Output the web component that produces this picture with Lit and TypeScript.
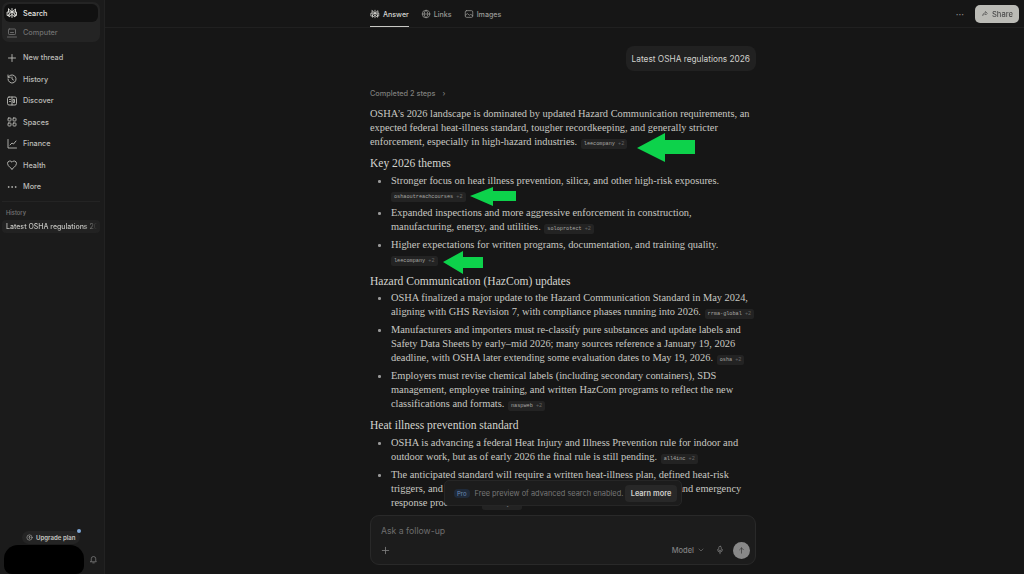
import { LitElement, html, css, svg } from "lit";
import { customElement } from "lit/decorators.js";

const ic = (body: unknown, size = 12) => html`<svg class="ic" width=${size} height=${size} viewBox="0 0 24 24" fill="none" stroke="currentColor" stroke-width="1.8" stroke-linecap="round" stroke-linejoin="round">${body}</svg>`;

const logo = svg`<path d="M12 3v18M5 4l7 6 7-6v6M5 4v6M3 10h18v7h-3v-3l-6-4-6 4v3H3zM6 14v6l6-5 6 5v-6"/>`;
const nav = [
  ["New thread", svg`<path d="M12 5v14M5 12h14"/>`],
  ["History", svg`<path d="M4 12a8 8 0 1 0 2.500-5.800L4 8.500M4 4v4.500h4.500M12 8v4l3 2"/>`],
  ["Discover", svg`<rect x="3" y="4" width="18" height="16" rx="3"/><path d="M12 4v16M7 9h2M7 13h2M15 9h2v6h-2z"/>`],
  ["Spaces", svg`<rect x="4" y="4" width="6" height="6" rx="1.500"/><rect x="14" y="4" width="6" height="6" rx="1.500"/><rect x="4" y="14" width="6" height="6" rx="1.500"/><rect x="14" y="14" width="6" height="6" rx="1.500"/>`],
  ["Finance", svg`<path d="M4 3v17h17M8 14l4-4 3 2 5-6"/>`],
  ["Health", svg`<path d="M12 20S3 14.500 3 8.800A4.800 4.800 0 0 1 12 6.500a4.800 4.800 0 0 1 9 2.300C21 14.500 12 20 12 20z"/>`],
  ["More", svg`<circle cx="5" cy="12" r=".8"/><circle cx="12" cy="12" r=".8"/><circle cx="19" cy="12" r=".8"/>`],
] as const;

const pill = (name: string) => html`<span class="pill">${name} <i>+2</i></span>`;

@customElement("app-root")
export class AppRoot extends LitElement {
  static styles = css`
    :host { display: block; width: 1024px; height: 574px; overflow: hidden; background: #161616; font-family: Inter, "Noto Sans", sans-serif; color: #d6d6d2; position: relative; }
    .app { display: flex; height: 574px; }
    .side { width: 105px; flex: none; box-sizing: border-box; background: #1b1b1b; border-right: 1px solid #222; display: flex; flex-direction: column; padding: 2px 4px 0 2px; font-size: 7.300px; font-weight: 500; color: #bdbdb9; }
    .ic { display: block; flex: none; }
    .mode { background: #242424; border-radius: 7px; height: 40px; margin-bottom: 5px; display: flex; flex-direction: column; box-sizing: border-box; padding: 2px 2px 0; }
    .mode div { height: 18px; display: flex; align-items: center; gap: 5px; padding-left: 2px; border-radius: 6px; }
    .mode .on { background: #111; color: #e4e4e0; }
    .mode .off { color: #707070; height: 19px; margin-top: 1px; }
    .nav { display: flex; align-items: center; gap: 5px; height: 21.500px; padding-left: 4px; }
    .hist { border-top: 1px solid #242424; margin-top: 3px; padding: 7px 4px 0; font-size: 5.800px; line-height: 7px; color: #777; }
    .thread { background: #222; border-radius: 4px; height: 13px; display: flex; align-items: center; padding: 0 3px 0 4px; margin: 4px 0 0; font-size: 7px; white-space: nowrap; overflow: hidden; color: #c4c4c0; }
    .thread span { display: block; width: 100%; overflow: hidden; -webkit-mask-image: linear-gradient(to right, #000 85%, transparent); mask-image: linear-gradient(to right, #000 85%, transparent); }
    .grow { flex: 1; }
    .up { align-self: flex-start; margin: 0 0 1px 20px; height: 13px; box-sizing: border-box; padding: 0 4px; display: flex; gap: 3px; align-items: center; background: #242424; border-radius: 7px; font-size: 6.100px; font-weight: 600; position: relative; color: #c4c4c0; white-space: nowrap; }
    .up b { position: absolute; right: -1px; top: -2px; width: 4px; height: 4px; border-radius: 50%; background: #7fa8d8; }
    .user { display: flex; align-items: center; margin-left: 2px; gap: 5px; color: #888; }
    .blob { width: 80px; height: 29px; background: #000; border-radius: 14px 14px 8px 8px; flex: none; }
    .main { flex: 1; min-width: 0; position: relative; overflow: hidden; }
    .top { height: 28px; box-sizing: border-box; border-bottom: 1px solid #202020; padding: 1px 0 0 265px; display: flex; align-items: stretch; font-size: 7.100px; color: #9a9a96; font-weight: 500; }
    .tab { display: flex; align-items: center; gap: 3px; margin-right: 12px; }
    .tab.on { color: #d8d8d4; box-shadow: inset 0 -1px 0 #c8c8c4; }
    .actions { margin-left: auto; display: flex; align-items: center; gap: 11px; padding-right: 5px; }
    .dots { color: #888; font-size: 9px; line-height: 1; }
    .share { display: flex; align-items: center; gap: 3px; height: 18px; padding: 0 6px; background: #d8d8d2; color: #555; border-radius: 5px; opacity: .85; font-size: 7.600px; }
    .col { padding-left: 265px; width: 386px; }
    .ask { display: flex; justify-content: flex-end; padding-top: 18px; }
    .ask span { background: #212121; border-radius: 8px; height: 25px; display: flex; align-items: center; padding: 0 6px; font-size: 8.300px; color: #d0d0cc; }
    .steps { margin-top: 18px; font-size: 7.300px; color: #7d7d7a; font-weight: 500; height: 9px; line-height: 9px; }
    .steps em { font-style: normal; margin-left: 5px; }
    .doc { font-family: "Liberation Serif", serif; font-size: 10.400px; line-height: 14px; color: #c8c8c2; white-space: nowrap; }
    p { margin: 9px 0 0; }
    h3 { margin: 7px 0 4px; font-size: 11.550px; font-weight: 400; line-height: 14px; color: #d4d4ce; }
    h3.shift { margin: 8px 0 3px; }
    ul { list-style: none; margin: 0; padding: 0 0 0 21px; position: relative; }
    li { margin-bottom: 4px; position: relative; }
    li::before { content: ""; position: absolute; left: -13px; top: 6px; width: 2.500px; height: 2.500px; border-radius: 50%; background: #999; }
    .pill { display: inline-block; vertical-align: 0; height: 10px; line-height: 10px; padding: 0 3px; margin-left: 1px; background: #232323; border-radius: 2.500px; font-family: "Liberation Mono", monospace; font-size: 5.200px; color: #a8a8a4; }
    .pill i { font-style: normal; color: #666; margin-left: 0; }
    li .block { display: block; line-height: 14px; height: 14px; }
    .block .pill { margin-left: 0; }
    .toast { position: absolute; left: 339px; top: 480px; width: 238px; height: 26px; box-sizing: border-box; background: #1c1c1c; border: 1px solid #262626; border-radius: 5px; display: flex; align-items: center; padding: 0 4px 0 9px; font-size: 7.400px; color: #777; white-space: nowrap; }
    .pro { background: #1f2a3a; color: #6d8db5; border-radius: 4px; font-size: 6px; padding: 1px 3px; margin-right: 5px; }
    .learn { margin-left: auto; background: #282828; color: #cfcfcb; border-radius: 4px; height: 17px; width: 52px; box-sizing: border-box; display: flex; align-items: center; justify-content: center; font-weight: 600; }
    .composer { position: absolute; left: 265px; top: 515px; width: 386px; height: 50px; box-sizing: border-box; background: #1c1c1c; border: 1px solid #292929; border-radius: 9px; padding: 10px 5px 0 10px; color: #6e6e6e; }
    .ph { font-size: 8.700px; line-height: 11px; }
    .tools { display: flex; align-items: center; margin-top: 4px; height: 18px; color: #808080; }
    .tools > .ic:first-child { margin-left: -1px; }
    .model { margin-left: auto; font-size: 7.500px; display: flex; gap: 3px; align-items: center; font-weight: 500; }
    .mic { margin: 0 8px 0 10px; }
    .send { width: 17px; height: 17px; border-radius: 50%; background: #888; color: #333; display: flex; align-items: center; justify-content: center; }
    .arrows { position: absolute; left: 0; top: 0; pointer-events: none; }
  `;

  render() {
    return html`
      <div class="app">
        <aside class="side">
          <div class="mode">
            <div class="on">${ic(logo, 12)}Search</div>
            <div class="off">${ic(svg`<rect x="5" y="4" width="14" height="11" rx="1.500"/><path d="M3 20h18M9 11h6"/>`, 12)}Computer</div>
          </div>
          ${nav.map(([t, i]) => html`<div class="nav">${ic(i, 12)}${t}</div>`)}
          <div class="hist">History</div>
          <div class="thread"><span>Latest OSHA regulations 2026</span></div>
          <div class="grow"></div>
          <div class="up">${ic(svg`<circle cx="12" cy="12" r="9"/><path d="M12 16V9M9 11l3-3 3 3"/>`, 7)}Upgrade plan<b></b></div>
          <div class="user"><div class="blob"></div>${ic(svg`<path d="M6 16V10a6 6 0 0 1 12 0v6l1.500 2h-15zM10 21h4"/>`, 9)}</div>
        </aside>
        <main class="main">
          <div class="top">
            <div class="tab on">${ic(logo, 10)}Answer</div>
            <div class="tab">${ic(svg`<circle cx="12" cy="12" r="9"/><path d="M3 12h18M12 3c-6 6-6 12 0 18M12 3c6 6 6 12 0 18"/>`, 10)}Links</div>
            <div class="tab">${ic(svg`<rect x="3" y="4" width="18" height="16" rx="3"/><path d="M3 15l5-4 5 4 3-2 5 3"/>`, 10)}Images</div>
            <div class="actions"><span class="dots">···</span><span class="share">${ic(svg`<path d="M14 5l5 5-5 5v-3c-4 0-7 1-9 5 0-5 3-9 9-9z"/>`, 8)}Share</span></div>
          </div>
          <div class="col">
            <div class="ask"><span>Latest OSHA regulations 2026</span></div>
            <div class="steps">Completed 2 steps <em>›</em></div>
            <div class="doc">
              <p>OSHA’s 2026 landscape is dominated by updated Hazard Communication requirements, an<br>expected federal heat-illness standard, tougher recordkeeping, and generally stricter<br>enforcement, especially in high-hazard industries. ${pill("leecompany")}</p>
              <h3>Key 2026 themes</h3>
              <ul>
                <li>Stronger focus on heat illness prevention, silica, and other high-risk exposures.<span class="block">${pill("oshaoutreachcourses")}</span></li>
                <li>Expanded inspections and more aggressive enforcement in construction,<br>manufacturing, energy, and utilities. ${pill("soloprotect")}</li>
                <li>Higher expectations for written programs, documentation, and training quality.<span class="block">${pill("leecompany")}</span></li>
              </ul>
              <h3 class="shift">Hazard Communication (HazCom) updates</h3>
              <ul>
                <li>OSHA finalized a major update to the Hazard Communication Standard in May 2024,<br>aligning with GHS Revision 7, with compliance phases running into 2026. ${pill("rrma-global")}</li>
                <li>Manufacturers and importers must re-classify pure substances and update labels and<br>Safety Data Sheets by early–mid 2026; many sources reference a January 19, 2026<br>deadline, with OSHA later extending some evaluation dates to May 19, 2026. ${pill("osha")}</li>
                <li>Employers must revise chemical labels (including secondary containers), SDS<br>management, employee training, and written HazCom programs to reflect the new<br>classifications and formats. ${pill("naspweb")}</li>
              </ul>
              <h3>Heat illness prevention standard</h3>
              <ul>
                <li>OSHA is advancing a federal Heat Injury and Illness Prevention rule for indoor and<br>outdoor work, but as of early 2026 the final rule is still pending. ${pill("all4inc")}</li>
                <li>The anticipated standard will require a written heat-illness plan, defined heat-risk<br>triggers, and acclimatization, rest, water, shade, monitoring, records, and emergency<br>response procedures. ${pill("ehstoday")}</li>
              </ul>
            </div>
          </div>
          <div class="toast"><span class="pro">Pro</span>Free preview of advanced search enabled.<span class="learn">Learn more</span></div>
          <div class="composer">
            <div class="ph">Ask a follow-up</div>
            <div class="tools">
              ${ic(svg`<path d="M12 5v14M5 12h14"/>`, 11)}
              <span class="model">Model ${ic(svg`<path d="M6 9l6 6 6-6"/>`, 8)}</span>
              <span class="mic">${ic(svg`<rect x="9" y="3" width="6" height="11" rx="3"/><path d="M6 11a6 6 0 0 0 12 0M12 17v4"/>`, 10)}</span>
              <span class="send">${ic(svg`<path d="M12 19V5M7 10l5-5 5 5"/>`, 9)}</span>
            </div>
          </div>
        </main>
      </div>
      <svg class="arrows" width="1024" height="574" viewBox="0 0 1024 574" fill="#0dd24b">
        <polygon points="637,148 665,133 665,140 695,140 695,154 665,154 665,162"/>
        <polygon points="470,196 493,187 493,191 516,191 516,201 493,201 493,206"/>
        <polygon points="443,262 463,251 463,257 483,257 483,268 463,268 463,274"/>
      </svg>
    `;
  }
}
